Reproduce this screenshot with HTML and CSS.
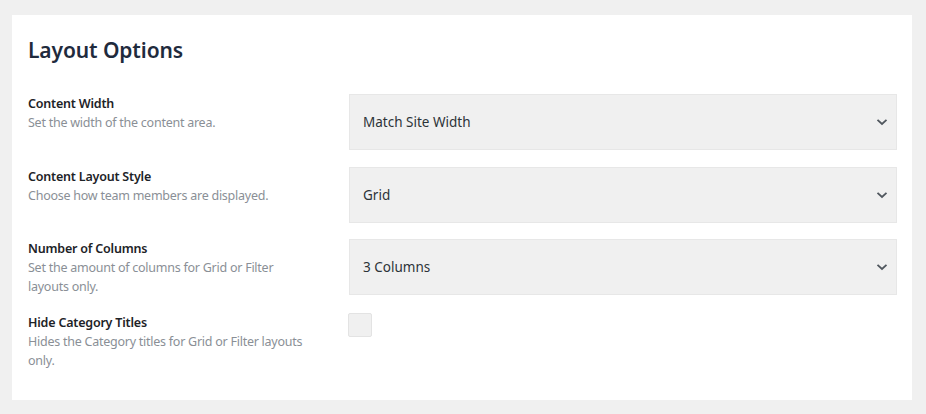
FILE: index.html
```html
<!DOCTYPE html>
<html lang="en">
  <head>
    <meta charset="UTF-8" />
    <meta name="viewport" content="width=device-width, initial-scale=1.0" />
    <title>Layout Options</title>
    <link rel="stylesheet" href="styles.css">
  </head>
  <body>
    <div class="panel">
      <h2 class="panel-title">Layout Options</h2>
      <div class="option">
        <div class="option-text">
          <p class="option-label">Content Width</p>
          <p class="option-desc">Set the width of the content area.</p>
        </div>
        <div class="select">
          <span>Match Site Width</span>
          <svg class="chevron" width="12" height="8" viewBox="0 0 12 8"><path d="M1.5 1.8 6 6 10.5 1.8" fill="none" stroke="#50575e" stroke-width="1.8"/></svg>
        </div>
      </div>
      <div class="option">
        <div class="option-text">
          <p class="option-label">Content Layout Style</p>
          <p class="option-desc">Choose how team members are displayed.</p>
        </div>
        <div class="select">
          <span>Grid</span>
          <svg class="chevron" width="12" height="8" viewBox="0 0 12 8"><path d="M1.5 1.8 6 6 10.5 1.8" fill="none" stroke="#50575e" stroke-width="1.8"/></svg>
        </div>
      </div>
      <div class="option">
        <div class="option-text">
          <p class="option-label">Number of Columns</p>
          <p class="option-desc">Set the amount of columns for Grid or Filter layouts only.</p>
        </div>
        <div class="select">
          <span>3 Columns</span>
          <svg class="chevron" width="12" height="8" viewBox="0 0 12 8"><path d="M1.5 1.8 6 6 10.5 1.8" fill="none" stroke="#50575e" stroke-width="1.8"/></svg>
        </div>
      </div>
      <div class="option">
        <div class="option-text">
          <p class="option-label">Hide Category Titles</p>
          <p class="option-desc">Hides the Category titles for Grid or Filter layouts only.</p>
        </div>
        <div class="control">
          <span class="checkbox"></span>
        </div>
      </div>
    </div>
  </body>
</html>
```

FILE: styles.css
```css
* {
  margin: 0;
  padding: 0;
  box-sizing: border-box;
}
body {
  background: #f0f0f0;
  font-family: "Noto Sans", "Open Sans", sans-serif;
  color: #1d2327;
  padding: 15px 14px 14px 12px;
}
.panel {
  width: 900px;
  height: 385px;
  background: #fff;
  padding: 21px 15px 0 16px;
}
.panel-title {
  font-size: 21px;
  font-weight: 600;
  line-height: 28px;
  color: #1f2b3d;
  letter-spacing: -0.1px;
  margin-bottom: 30px;
}
.option {
  display: grid;
  grid-template-columns: 282px 1fr;
  column-gap: 39px;
  min-height: 56px;
  margin-bottom: 16.5px;
}
.option:last-child {
  margin-bottom: 0;
}
.option-label {
  font-size: 12.5px;
  font-weight: 600;
  line-height: 19px;
  letter-spacing: -0.2px;
  color: #1d2327;
}
.option-desc {
  font-size: 12.5px;
  line-height: 19px;
  letter-spacing: -0.25px;
  color: #8a8f96;
}
.select {
  height: 56px;
  background: #f0f0f0;
  border: 1px solid #e7e7e7;
  display: flex;
  align-items: center;
  justify-content: space-between;
  padding: 0 8px 0 13px;
  font-size: 13.5px;
  color: #2c3338;
}
.chevron {
  display: block;
}
.checkbox {
  display: block;
  width: 24px;
  height: 24px;
  background: #f0f0f0;
  border: 1px solid #e3e3e3;
  border-radius: 2px;
  margin-left: -1px;
}
```
